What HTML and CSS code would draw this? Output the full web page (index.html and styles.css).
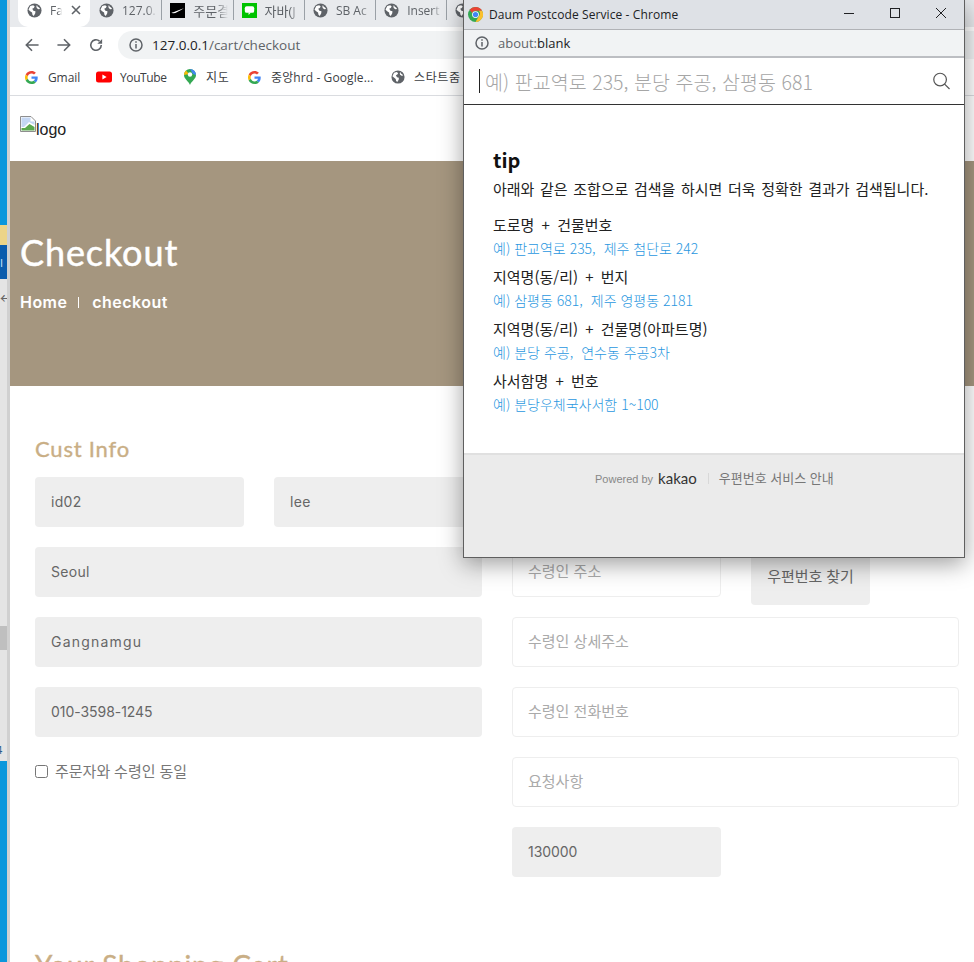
FILE: index.html
```html
<!DOCTYPE html>
<html lang="ko">
<head>
<meta charset="utf-8">
<title>Checkout</title>
<link rel="stylesheet" href="styles.css">
</head>
<body>
<svg class="defs" width="0" height="0" aria-hidden="true">
  <symbol id="globe" viewBox="0 0 16 16">
    <circle cx="8" cy="8" r="7.500" fill="#5f6368"/>
    <path d="M3.500 3.200 6.600 2.400 8.200 3.600 7.200 5.200 5.600 6 6.800 8.200 9 8.800 8.800 11 7.200 13.800 5.800 12.600 5.400 10.200 3 8.400 1.600 7Z" fill="#fff"/>
    <path d="M10.600 2.200 11.400 4 12.800 4.800 14 6.400 12 6.600 10.400 5.400 10 3.600Z" fill="#fff"/>
  </symbol>
  <symbol id="gicon" viewBox="0 0 48 48">
    <path fill="#EA4335" d="M24 9.500c3.500 0 6.700 1.200 9.200 3.600l6.900-6.900C35.900 2.400 30.500 0 24 0 14.600 0 6.500 5.400 2.600 13.200l8 6.200C12.400 13.700 17.700 9.500 24 9.500z"/>
    <path fill="#4285F4" d="M46.900 24.500c0-1.600-.1-3.100-.4-4.500H24v9h12.900c-.6 3-2.200 5.500-4.800 7.200l7.700 6c4.500-4.200 7.100-10.300 7.100-17.700z"/>
    <path fill="#FBBC05" d="M10.500 28.600c-.5-1.400-.8-3-.8-4.600s.3-3.200.8-4.600l-8-6.200C.9 16.500 0 20.100 0 24s.9 7.500 2.600 10.800l7.900-6.200z"/>
    <path fill="#34A853" d="M24 48c6.500 0 11.900-2.100 15.900-5.800l-7.700-6c-2.100 1.400-4.900 2.300-8.200 2.300-6.300 0-11.600-4.200-13.500-9.900l-8 6.200C6.500 42.600 14.600 48 24 48z"/>
  </symbol>
</svg>

<div class="screen">
  <div class="desktop-strip">
    <div class="strip-blue"></div>
    <div class="strip-yellow"></div>
    <div class="strip-navy">I</div>
    <div class="strip-gray strip-arrow">←</div>
    <div class="strip-dark"></div>
    <div class="strip-gray strip-num">4</div>
    <div class="strip-blue strip-end"></div>
  </div>

  <div class="browser">
    <div class="tabs">
      <div class="tab tab-active">
        <svg class="fav"><use href="#globe"/></svg><span class="tab-title tab-short">Fa</span>
        <svg class="tab-close" viewBox="0 0 10 10"><path d="M1 1 9 9M9 1 1 9"/></svg>
      </div>
      <div class="tab"><svg class="fav"><use href="#globe"/></svg><span class="tab-title">127.0.</span></div>
      <div class="tab tab-sep">
        <svg class="fav" viewBox="0 0 16 16"><rect width="16" height="16" fill="#000"/><path d="M1.500 10.500C5 9.500 10 7 14.800 5.500 10 8.500 6 10.800 3.800 10.900 2.800 11 2 10.900 1.500 10.500Z" fill="#fff"/></svg>
        <span class="tab-title tab-ko">주문결</span>
      </div>
      <div class="tab tab-sep">
        <svg class="fav" viewBox="0 0 16 16"><rect width="16" height="16" fill="#00c300"/><rect x="3" y="3.500" width="10" height="7" rx="2" fill="#fff"/><path d="M7 10h2.500L7 12.800Z" fill="#fff"/></svg>
        <span class="tab-title tab-ko">자바(J</span>
      </div>
      <div class="tab tab-sep"><svg class="fav"><use href="#globe"/></svg><span class="tab-title">SB Ac</span></div>
      <div class="tab tab-sep"><svg class="fav"><use href="#globe"/></svg><span class="tab-title">Insert</span></div>
      <div class="tab tab-sep"><svg class="fav"><use href="#globe"/></svg></div>
    </div>

    <div class="toolbar">
      <svg class="nav-icon" viewBox="0 0 16 16"><path d="M15.500 8H1.500M8 1.500 1.500 8 8 14.500"/></svg>
      <svg class="nav-icon" viewBox="0 0 16 16"><path d="M.5 8H14.500M8 1.500 14.500 8 8 14.500"/></svg>
      <svg class="nav-icon" viewBox="0 0 16 16"><path d="M14 8A6 6 0 1 1 12 3.600"/><path class="nav-solid" d="M15 1V6.500H9.500Z"/></svg>
      <div class="omnibox">
        <svg class="info" viewBox="0 0 14 14"><circle cx="7" cy="7" r="6"/><path d="M7 6v4.500M7 3.200v1.500"/></svg>
        <span class="url"><b class="url-host">127.0.0.1</b>/cart/checkout</span>
      </div>
    </div>

    <div class="bookmarks">
      <span class="bm bm-gmail"><svg class="bm-icon"><use href="#gicon"/></svg>Gmail</span>
      <span class="bm bm-yt"><svg class="bm-icon bm-icon-yt" viewBox="0 0 16 12"><rect width="16" height="11" y=".5" rx="2.500" fill="#f00"/><path d="M6.400 3.500 10.600 6 6.400 8.500Z" fill="#fff"/></svg>YouTube</span>
      <span class="bm bm-map bm-ko"><svg class="bm-icon bm-icon-map" viewBox="0 0 12 16"><path d="M6 0a6 6 0 0 1 6 6C12 10 7.500 12 6 16 4.500 12 0 10 0 6a6 6 0 0 1 6-6Z" fill="#34a853"/><path d="M6 0a6 6 0 0 1 6 6L9 5 6 0Z" fill="#4285f4"/><path d="M0 6a6 6 0 0 1 2-4.400L5 5Z" fill="#fbbc05"/><circle cx="6" cy="5.500" r="2.200" fill="#fff"/></svg>지도</span>
      <span class="bm bm-hrd"><svg class="bm-icon"><use href="#gicon"/></svg>중앙hrd - Google...</span>
      <span class="bm bm-start bm-ko"><svg class="bm-icon bm-icon-globe"><use href="#globe"/></svg>스타트줌</span>
    </div>

    <header class="site-header">
      <span class="logo-img">
        <svg class="broken" viewBox="0 0 16 16"><path d="M.5.5H11L15.500 5V15.500H.5Z" fill="#fff" stroke="#8e8e8e"/><path d="M1.500 1.500H10.500V5.500H14.500V9L9 6 4 11H1.500Z" fill="#c4d7f4"/><path d="M1.500 14.500V12L5 12 9.500 8 14.500 11V14.500Z" fill="#5aa84e"/></svg><span>logo</span>
      </span>
    </header>

    <section class="hero">
      <h1 class="hero-title">Checkout</h1>
      <div class="crumbs"><span>Home</span><i class="crumb-sep"></i><span>checkout</span></div>
    </section>

    <main class="checkout">
      <div class="form-grid">
        <div class="form-col">
          <h2 class="section-title">Cust Info</h2>
          <div class="form-row">
            <div class="field field-filled">id02</div>
            <div class="field field-filled">lee</div>
          </div>
          <div class="field field-filled">Seoul</div>
          <div class="field field-filled field-wide">Gangnamgu</div>
          <div class="field field-filled field-num">010-3598-1245</div>
          <label class="same-check"><input type="checkbox"><span>주문자와 수령인 동일</span></label>
        </div>
        <div class="form-col form-col-right">
          <div class="form-row form-row-top">
            <div class="field field-empty">수령인 주소</div>
            <div class="zip-btn">우편번호 찾기</div>
          </div>
          <div class="field field-empty">수령인 상세주소</div>
          <div class="field field-empty">수령인 전화번호</div>
          <div class="field field-empty">요청사항</div>
          <div class="form-row">
            <div class="field field-filled field-num">130000</div>
            <div></div>
          </div>
        </div>
      </div>
      <h2 class="section-title cart-title">Your Shopping Cart</h2>
    </main>
  </div>

  <aside class="popup">
    <div class="popup-title">
      <svg class="chrome-logo" viewBox="0 0 16 16">
        <circle cx="8" cy="8" r="8" fill="#34a853"/>
        <path d="M8 0a8 8 0 0 1 7 4H8a4 4 0 0 0-3.600 2.300L1.700 3A8 8 0 0 1 8 0Z" fill="#ea4335"/>
        <path d="M15 4a8 8 0 0 1-7 12l3.400-6A4 4 0 0 0 11.500 4Z" fill="#fbc02d"/>
        <circle cx="8" cy="8" r="3.600" fill="#fff"/><circle cx="8" cy="8" r="2.800" fill="#4285f4"/>
      </svg>
      <span class="popup-name">Daum Postcode Service - Chrome</span>
      <div class="win-controls">
        <svg viewBox="0 0 10 10"><path d="M0 5.500H10"/></svg>
        <svg viewBox="0 0 10 10"><rect x=".5" y=".5" width="9" height="9"/></svg>
        <svg viewBox="0 0 10 10"><path d="M0 0 10 10M10 0 0 10"/></svg>
      </div>
    </div>
    <div class="popup-address">
      <svg class="info" viewBox="0 0 14 14"><circle cx="7" cy="7" r="6"/><path d="M7 6v4.500M7 3.200v1.500"/></svg>
      <span><span class="about">about:</span>blank</span>
    </div>
    <div class="post-search">
      <i class="caret"></i>
      <span class="post-placeholder">예) 판교역로 235, 분당 주공, 삼평동 681</span>
      <svg class="post-glass" viewBox="0 0 18 18"><circle cx="7.500" cy="7.500" r="6.700"/><path d="M12.300 12.300 17.500 17.500"/></svg>
    </div>
    <div class="post-body">
      <h3 class="tip-title">tip</h3>
      <p class="tip-lead">아래와 같은 조합으로 검색을 하시면 더욱 정확한 결과가 검색됩니다.</p>
      <dl class="tip-list">
        <dt>도로명 + 건물번호</dt>
        <dd>예) 판교역로 235,<span class="gap">제주 첨단로 242</span></dd>
        <dt>지역명(동/리) + 번지</dt>
        <dd>예) 삼평동 681,<span class="gap">제주 영평동 2181</span></dd>
        <dt>지역명(동/리) + 건물명(아파트명)</dt>
        <dd>예) 분당 주공,<span class="gap">연수동 주공3차</span></dd>
        <dt>사서함명 + 번호</dt>
        <dd>예) 분당우체국사서함 1~100</dd>
      </dl>
    </div>
    <div class="post-footer">
      <span class="powered">Powered by</span>
      <span class="kakao">kakao</span>
      <i class="foot-sep"></i>
      <span class="foot-link">우편번호 서비스 안내</span>
    </div>
  </aside>
</div>
</body>
</html>
```
FILE: styles.css
```css
* { box-sizing: border-box; }
html, body { margin: 0; height: 100%; overflow: hidden; background: #fff; }
body { font-family: "Open Sans", "Noto Sans CJK KR", sans-serif; color: #333; }
.defs { position: absolute; }
.screen { position: relative; display: flex; width: 974px; height: 962px; overflow: hidden; }

/* desktop sliver behind the main browser window */
.desktop-strip { width: 7px; flex: none; display: flex; flex-direction: column; font-size: 11px; line-height: 1; overflow: hidden; }
.strip-blue { height: 225px; background: #0a97dc; flex: none; }
.strip-end { height: auto; flex: 1; }
.strip-yellow { height: 20px; flex: none; background: #ecd488; }
.strip-navy { height: 34px; flex: none; background: #0b5cad; color: #cfe4ff; padding-top: 12px; }
.strip-gray { flex: none; background: #e4e4e4; }
.strip-arrow { height: 347px; padding-top: 12px; color: #666; margin-left: -6px; font-size: 14px; padding-left: 6px; width: 13px; }
.strip-dark { height: 24px; flex: none; background: #bfbfbf; }
.strip-num { height: 111px; padding-top: 94px; color: #2b5c8a; margin-left: -4px; width: 11px; padding-left: 0; }

.browser { flex: 1; min-width: 0; border-left: 3px solid; border-image: linear-gradient(90deg, #d0d0d0 33%, #777 33%, #777 66%, #bbb 66%) 1; display: flex; flex-direction: column; }

/* tab strip */
.tabs { height: 27px; flex: none; background: #e8eaed; display: flex; padding-left: 8px; overflow: hidden; }
.tab { width: 71.3px; flex: none; display: flex; align-items: center; padding-left: 9px; font-size: 12px; color: #5f6368; position: relative; }
.tab-active { background: #fff; border-radius: 0 0 10px 10px; width: 72px; }
.tab-sep::before { content: ""; position: absolute; left: 0; top: 0; bottom: 7px; width: 1px; background: #9aa0a6; }
.fav { width: 16px; height: 16px; flex: none; margin-right: 7px; }
.tab .fav { width: 15px; height: 15px; margin-right: 8px; margin-top: -7px; }
.tab-title { display: block; width: 35px; overflow: hidden; white-space: nowrap; margin-top: -7px; -webkit-mask-image: linear-gradient(90deg, #000 70%, transparent); mask-image: linear-gradient(90deg, #000 70%, transparent); }
.tab-ko { font-size: 13px; }
.tab-short { width: 12px; }
.tab-close { width: 10px; height: 10px; margin-left: 9px; margin-top: -7px; fill: none; stroke: #5f6368; stroke-width: 1.6; }

/* toolbar */
.toolbar { height: 36px; flex: none; display: flex; align-items: center; padding: 0 0 0 15px; background: #fff; }
.nav-icon { width: 14px; height: 14px; margin-right: 18px; fill: none; stroke: #5f6368; stroke-width: 1.8; flex: none; }
.nav-solid { fill: #5f6368; stroke: none; }
.omnibox { flex: 1; height: 28px; margin-left: -3px; background: #f1f3f4; border-radius: 14px 0 0 14px; display: flex; align-items: center; padding-left: 11px; gap: 9px; font-size: 13.5px; color: #5f6368; white-space: nowrap; }
.info { width: 14px; height: 14px; fill: none; stroke: #5f6368; stroke-width: 1.5; flex: none; }
.url-host { font-weight: 400; color: #202124; }

/* bookmarks */
.bookmarks { height: 33px; flex: none; display: flex; align-items: center; padding: 0 0 4px 15px; font-size: 12px; color: #3c4043; border-bottom: 1px solid #dadce0; white-space: nowrap; }
.bm { display: flex; align-items: center; flex: none; }
.bm-ko { letter-spacing: .6px; }
.bm-icon { width: 13px; height: 13px; margin-right: 10px; flex: none; }
.bm-icon-yt { width: 16px; height: 12px; margin-right: 8px; }
.bm-icon-map { width: 12px; height: 16px; }
.bm-icon-globe { width: 14px; height: 14px; margin-right: 9px; }
.bm-gmail { width: 71px; letter-spacing: -.1px; }
.bm-yt { width: 88px; letter-spacing: -.4px; }
.bm-map { width: 64px; }
.bm-hrd { width: 143px; letter-spacing: .1px; }

/* site */
.site-header { height: 65px; flex: none; display: flex; align-items: flex-start; padding: 21px 0 0 10px; background: #fff; }
.logo-img { display: flex; font: 16px/18px "Liberation Sans", sans-serif; color: #222; padding-top: 4px; }
.broken { width: 16px; height: 16px; flex: none; margin-top: -5px; }
.hero { height: 225px; flex: none; background: #a5967f; color: #fff; padding: 69px 0 0 10px; }
.hero-title { margin: 0; font: 400 36px/44px "Lato", "Noto Sans CJK KR", sans-serif; letter-spacing: .9px; -webkit-text-stroke: .5px #fff; }
.crumbs { display: flex; align-items: center; margin-top: 17px; font: 600 16px/22px "Inter", sans-serif; letter-spacing: .45px; }
.crumb-sep { width: 1px; height: 11px; background: #fff; margin: 0 13px 0 11px; }

.checkout { flex: 1; padding: 47px 15px 0 25px; background: #fff; }
.form-grid { display: grid; grid-template-columns: 447px 447px; column-gap: 30px; }
.form-col { display: flex; flex-direction: column; gap: 20px; }
.form-col-right { padding-top: 114px; }
.section-title { margin: 0 0 -6px; height: 30px; padding-top: 1px; font: 400 22px/30px "Lato", "Noto Sans CJK KR", sans-serif; color: #c9ae85; letter-spacing: .8px; -webkit-text-stroke: .35px #c9ae85; }
.form-row { display: grid; grid-template-columns: 209px 208px; column-gap: 30px; }
.form-col-right .form-row { grid-template-columns: 209px 119px; }
.form-row-top { height: 50px; align-items: start; }
.field { height: 50px; border-radius: 4px; padding: 0 16px 2px; display: flex; align-items: center; font-size: 14px; letter-spacing: .3px; font-family: "Inter", "Noto Sans CJK KR", sans-serif; }
.field-wide { letter-spacing: 1.2px; }
.field-num { letter-spacing: -.05px; }
.field-filled { background: #eee; color: #666; }
.field-empty { border: 1px solid #eee; background: #fff; color: #aaa; font-size: 15px; letter-spacing: 0; padding: 0 15px 4px; }
.zip-btn { height: 58px; background: #eee; border-radius: 4px; display: flex; align-items: center; justify-content: center; font-size: 15px; color: #666; padding-bottom: 2px; white-space: nowrap; }
.same-check { display: flex; align-items: center; gap: 7px; font-size: 15px; color: #777; margin-top: 4px; height: 18px; }
.same-check input { margin: 2px 0 0; width: 13px; height: 13px; flex: none; }
.cart-title { margin-top: 72px; font-size: 28px; letter-spacing: .9px; }

/* popup window */
.popup { position: absolute; left: 463px; top: 0; width: 502px; height: 558px; background: #fff; border: 1px solid #5f5f5f; border-top: 0; box-shadow: 0 6px 22px rgba(0,0,0,.38); display: flex; flex-direction: column; font-family: "Open Sans", "Noto Sans CJK KR", sans-serif; }
.popup-title { height: 30px; flex: none; background: #dee1e6; display: flex; align-items: center; padding-left: 4px; font-size: 12px; color: #202124; border-bottom: 1px solid #b0b2b6; }
.chrome-logo { width: 15px; height: 15px; flex: none; margin-right: 6px; }
.popup-name { flex: 1; letter-spacing: .1px; }
.win-controls { display: flex; gap: 36px; padding-right: 18px; margin-top: -4px; }
.win-controls svg { width: 10px; height: 10px; fill: none; stroke: #202124; stroke-width: 1; }
.popup-address { height: 28px; flex: none; display: flex; align-items: center; gap: 9px; padding-left: 11px; background: #f1f3f4; font-size: 13px; color: #5f6368; border-bottom: 2px solid #bcbec2; }
.popup-address > span { color: #202124; }
.popup-address .about { color: #5f6368; }
.post-search { height: 47px; flex: none; border-bottom: 1px solid #333; display: flex; align-items: center; padding: 0 14px 0 15px; }
.caret { width: 1px; height: 24px; background: #222; margin-right: 5px; flex: none; }
.post-placeholder { flex: 1; font-size: 19.5px; font-weight: 300; color: #a6a6a6; font-family: "Noto Sans CJK KR", sans-serif; white-space: nowrap; letter-spacing: .05px; }
.post-glass { width: 17px; height: 18px; fill: none; stroke: #555; stroke-width: 1.3; flex: none; }
.post-body { height: 348px; flex: none; padding: 43px 29px 0; color: #222; }
.tip-title { margin: 0; font: 700 20px/24px "Noto Sans CJK KR", sans-serif; color: #111; }
.tip-lead { margin: 7px 0 0; font-size: 15px; line-height: 20px; font-family: "Noto Sans CJK KR", sans-serif; word-spacing: 1.400px; white-space: nowrap; }
.tip-list { margin: 16px 0 0; font-family: "Noto Sans CJK KR", sans-serif; }
.tip-list dt { font-size: 15px; line-height: 20px; word-spacing: 3px; }
.tip-list dd { margin: 3px 0 9px; font-size: 14px; line-height: 20px; color: #2a97e0; font-weight: 300; }
.gap { margin-left: 8px; }
.post-footer { flex: 1; background: #ebebeb; border-top: 2px solid #e0e0e0; display: flex; align-items: flex-start; padding: 13px 0 0 131px; color: #777; }
.powered { font: 11px/20px "Liberation Sans", sans-serif; color: #888; margin-top: 1px; }
.kakao { font: 15px/20px "Lato", sans-serif; color: #333; margin-left: 5px; }
.foot-sep { width: 1px; height: 11px; background: #d8d8d8; margin: 5px 10px 0 11px; }
.foot-link { font: 13px/20px "Noto Sans CJK KR", sans-serif; color: #777; }
```
